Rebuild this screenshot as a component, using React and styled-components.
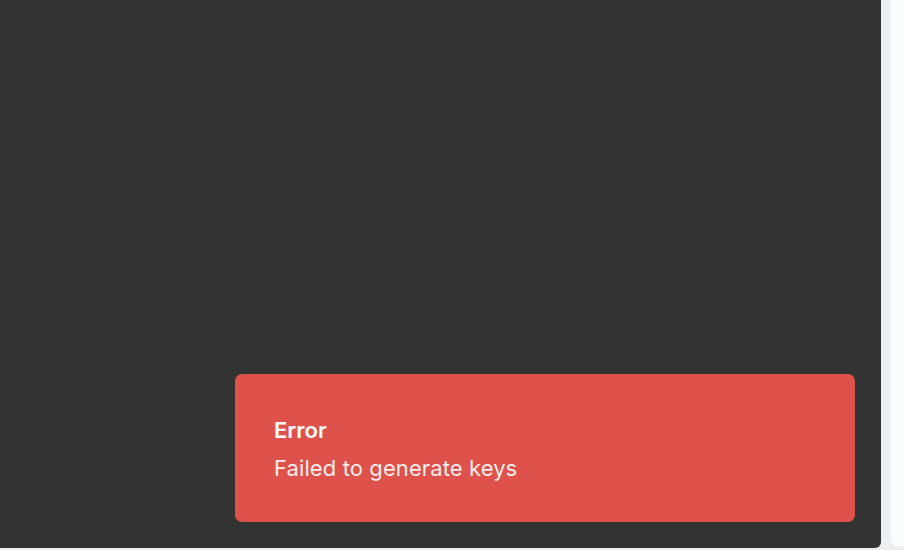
import React from 'react'
import styled, { createGlobalStyle } from 'styled-components'

const GlobalStyle = createGlobalStyle`
  html, body {
    margin: 0;
    padding: 0;
    background: #eceeef;
    font-family: Inter, "Noto Sans", sans-serif;
    overflow: hidden;
  }
`

const Layout = styled.div`
  display: flex;
  gap: 10px;
  width: 904px;
  height: 550px;
`

const Stage = styled.main`
  width: 881px;
  height: 548px;
  background: #333333;
  border-radius: 0 0 6px 0;
  display: flex;
  align-items: flex-end;
  justify-content: flex-end;
  padding: 0 26px 26px 0;
  box-sizing: border-box;
`

const SidePanel = styled.aside`
  flex: 1;
  height: 546px;
  background: #fafbfb;
  border-radius: 0 0 0 6px;
`

const Toast = styled.div`
  width: 620px;
  height: 148px;
  box-sizing: border-box;
  padding: 42px 39px 0;
  background: ${(p) => (p.variant === 'error' ? '#de524b' : '#333')};
  border-radius: 7px;
  color: #fff;
  display: flex;
  flex-direction: column;
  gap: 10px;
`

const ToastTitle = styled.div`
  font-size: 22px;
  font-weight: 600;
  line-height: 28px;
`

const ToastText = styled.div`
  font-size: 22px;
  font-weight: 400;
  line-height: 28px;
  letter-spacing: 0.1px;
  color: rgba(255, 255, 255, 0.92);
`

export default function App() {
  return (
    <>
      <GlobalStyle />
      <Layout>
        <Stage>
          <Toast variant="error">
            <ToastTitle>Error</ToastTitle>
            <ToastText>Failed to generate keys</ToastText>
          </Toast>
        </Stage>
        <SidePanel />
      </Layout>
    </>
  )
}
